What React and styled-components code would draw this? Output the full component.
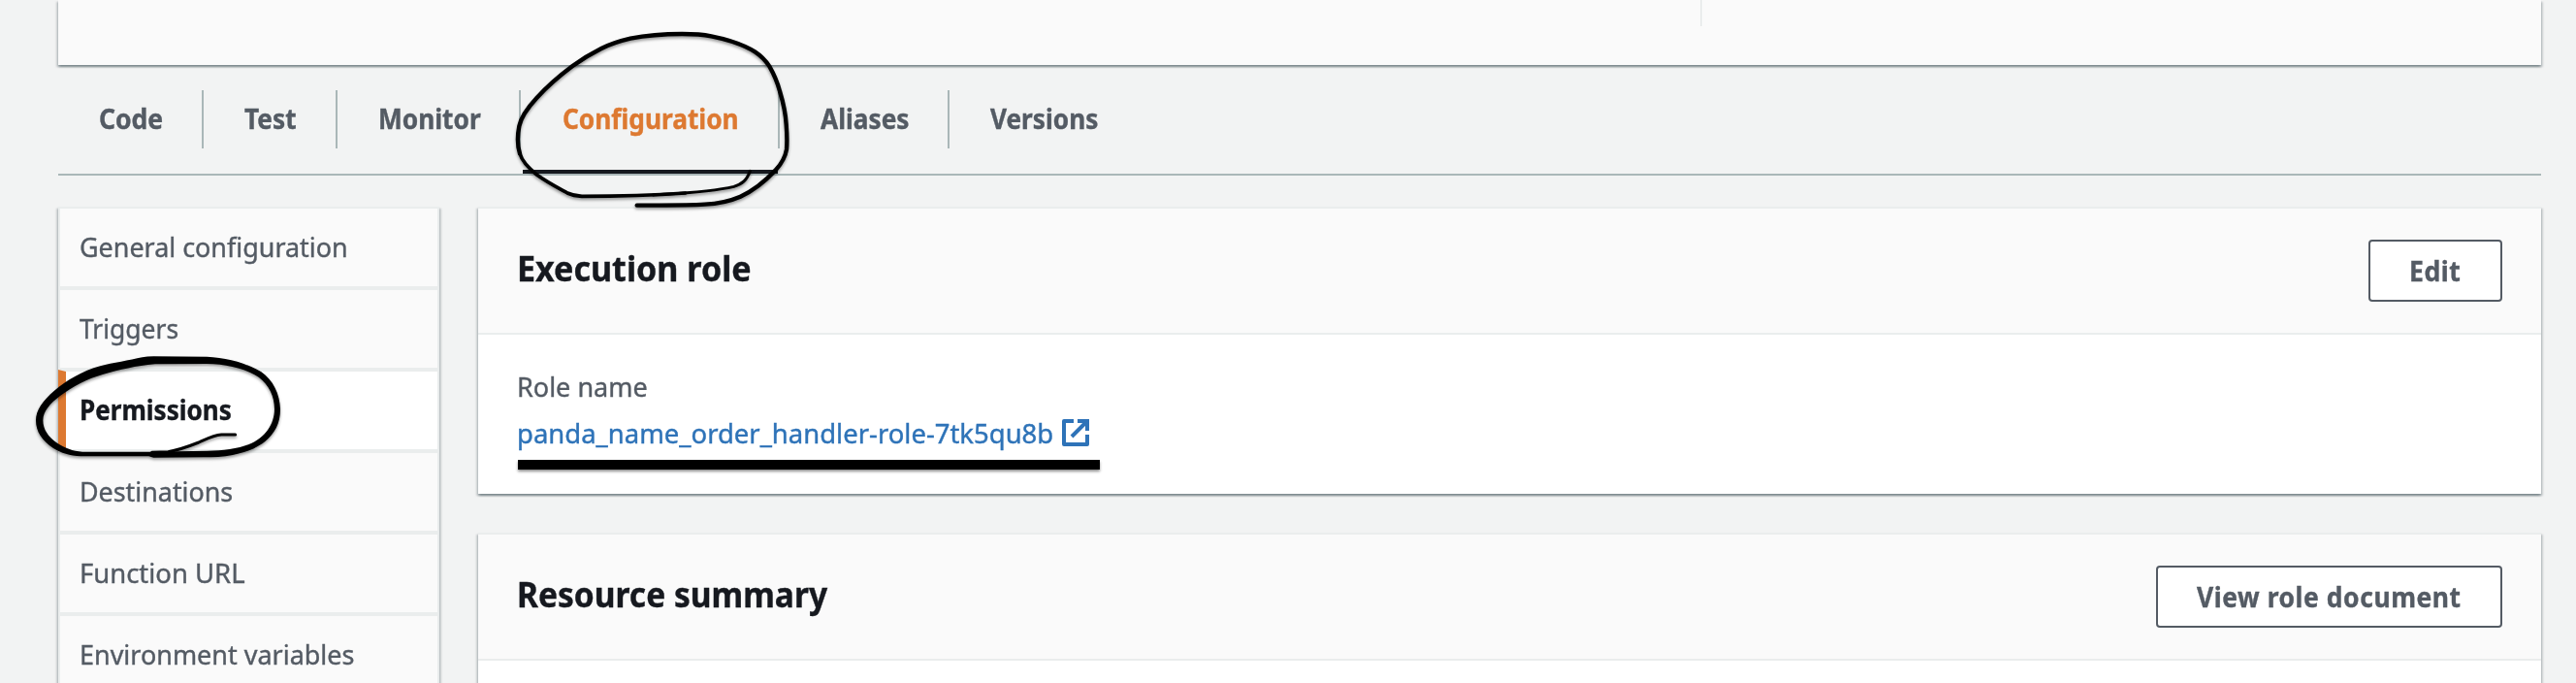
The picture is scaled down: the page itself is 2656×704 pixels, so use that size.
import React from "react";
import styled, { createGlobalStyle, css } from "styled-components";

const GlobalStyle = createGlobalStyle`
  * { box-sizing: border-box; }
  html, body { margin: 0; padding: 0; }
  body {
    background: #f2f3f3;
    color: #16191f;
    font-family: "Noto Sans", "Open Sans", sans-serif;
    font-size: 28px;
  }
`;

const cardShadow = css`
  box-shadow:
    0 2px 2px 0 rgba(0, 28, 36, 0.3),
    2px 2px 2px 0 rgba(0, 28, 36, 0.15),
    -2px 2px 2px 0 rgba(0, 28, 36, 0.15);
`;

const Page = styled.main`
  position: relative;
  width: 2656px;
  height: 704px;
  overflow: hidden;
  padding: 0 36px 0 60px;
  display: flex;
  flex-direction: column;
`;

/* Text condensed horizontally by a small factor, anchored at its left edge. */
const Label = styled.span`
  display: inline-block;
  white-space: nowrap;
  transform: scaleX(${(p) => p.$fit || 0.96});
  transform-origin: left center;
  -webkit-text-stroke: 0.4px currentColor;
`;

const OverviewCard = styled.section`
  height: 67px;
  flex: none;
  display: flex;
  background: #fafafa;
  ${cardShadow}
`;

const OverviewColumn = styled.div`
  width: 1695px;
  height: 27px;
  border-right: 2px solid #eaeded;
`;

const TabBar = styled.nav`
  flex: none;
  display: flex;
  height: 114px;
  padding-top: 26px;
  border-bottom: 2px solid #aab7b8;
`;

const Tab = styled.a`
  position: relative;
  width: ${(p) => p.$width}px;
  height: 60px;
  padding-left: ${(p) => p.$inset}px;
  border-right: 2px solid ${(p) => (p.$last ? "transparent" : "#aab7b8")};
  color: ${(p) => (p.$active ? "#dd7931" : "#545b64")};
  font-weight: 700;
  line-height: 58px;
  ${(p) =>
    p.$active &&
    css`
      &::after {
        content: "";
        position: absolute;
        left: 2px;
        right: 0;
        bottom: -26px;
        height: 4px;
        background: #16191f;
      }
    `}
`;

const Content = styled.div`
  flex: 1;
  display: flex;
  align-items: flex-start;
  gap: 40px;
  padding-top: 32px;
`;

const SideNav = styled.ul`
  width: 393px;
  flex: none;
  margin: 0;
  padding: 0;
  list-style: none;
  border: 2px solid #eaeded;
  background: #eaeded;
  display: flex;
  flex-direction: column;
  gap: 4px;
  ${cardShadow}
`;

const SideItem = styled.li`
  height: 80px;
  padding-left: 20px;
  line-height: 78px;
  background: #fafafa;
  color: #545b64;
  ${(p) =>
    p.$active &&
    css`
      height: 84px;
      margin: -2px 0 -2px -2px;
      padding-left: 14px;
      border-style: solid;
      border-width: 2px 0 2px 8px;
      border-color: #eaeded #eaeded #eaeded #dd7931;
      background: #fff;
      background-clip: padding-box;
      color: #16191f;
      font-weight: 700;
    `}
`;

const Panels = styled.div`
  flex: 1;
  display: flex;
  flex-direction: column;
  gap: 40px;
`;

const Card = styled.section`
  height: ${(p) => p.$height}px;
  border-top: 2px solid #eaeded;
  background: #fff;
  ${cardShadow}
`;

const CardHeader = styled.header`
  height: 130px;
  display: flex;
  align-items: center;
  justify-content: space-between;
  padding: 0 40px;
  background: #fafafa;
  border-bottom: 2px solid #eaeded;
`;

const Title = styled.h2`
  margin: 0;
  padding-bottom: 5px;
  font-size: 36px;
  line-height: 44px;
  font-weight: 700;
`;

const Button = styled.button`
  width: ${(p) => p.$width}px;
  height: 64px;
  padding: 0 0 1px 40px;
  border: 2px solid #545b64;
  border-radius: 4px;
  background: #fff;
  color: #545b64;
  font: 700 28px/56px "Noto Sans", "Open Sans", sans-serif;
  letter-spacing: 0.6px;
  text-align: left;
`;

const CardBody = styled.div`
  padding: 31px 40px 0;
  display: flex;
  flex-direction: column;
  gap: 4px;
`;

const FieldName = styled.div`
  height: 44px;
  line-height: 44px;
  color: #545b64;
`;

const RoleLink = styled.a`
  width: 590px;
  height: 44px;
  display: flex;
  align-items: center;
  justify-content: space-between;
  line-height: 44px;
  color: #2e73b8;
`;

const LinkText = styled.span`
  width: 552px;
`;

const Underline = styled.div`
  width: 600px;
  height: 10px;
  margin: 2px 0 0 1px;
  background: #000;
  box-shadow: 0 2px 3px rgba(0, 0, 0, 0.45);
`;

const Sketch = styled.svg`
  position: absolute;
  left: ${(p) => p.$x}px;
  top: ${(p) => p.$y}px;
  overflow: visible;
  pointer-events: none;
  filter: drop-shadow(0 2px 1.5px rgba(0, 0, 0, 0.4));
`;

const ExternalIcon = () => (
  <svg width="28" height="28" viewBox="0 0 28 28" fill="none" stroke="#2e73b8" strokeWidth="4">
    <path d="M12 2H2V26H26V16" strokeLinejoin="round" />
    <path d="M16 2H26V12M10 18L25 3" />
  </svg>
);

const tabs = [
  { name: "Code", width: 150, inset: 42, fit: 0.947 },
  { name: "Test", width: 138, inset: 42, fit: 0.937 },
  { name: "Monitor", width: 189, inset: 42, fit: 0.938 },
  { name: "Configuration", width: 267, inset: 43, fit: 0.938, active: true },
  { name: "Aliases", width: 175, inset: 42, fit: 0.937 },
  { name: "Versions", width: 200, inset: 42, fit: 0.935, last: true },
];

const sideItems = [
  { name: "General configuration", fit: 0.961 },
  { name: "Triggers", fit: 0.944 },
  { name: "Permissions", fit: 0.931, active: true },
  { name: "Destinations", fit: 0.959 },
  { name: "Function URL", fit: 0.98 },
  { name: "Environment variables", fit: 0.963 },
];

export default function App() {
  return (
    <Page>
      <GlobalStyle />
      <OverviewCard>
        <OverviewColumn />
      </OverviewCard>

      <TabBar>
        {tabs.map((t) => (
          <Tab key={t.name} $width={t.width} $inset={t.inset} $active={t.active} $last={t.last}>
            <Label $fit={t.fit}>{t.name}</Label>
          </Tab>
        ))}
      </TabBar>

      <Content>
        <SideNav>
          {sideItems.map((s) => (
            <SideItem key={s.name} $active={s.active}>
              <Label $fit={s.fit}>{s.name}</Label>
            </SideItem>
          ))}
        </SideNav>

        <Panels>
          <Card $height={296}>
            <CardHeader>
              <Title>
                <Label $fit={0.946}>Execution role</Label>
              </Title>
              <Button $width={138}>
                <Label $fit={0.95}>Edit</Label>
              </Button>
            </CardHeader>
            <CardBody>
              <FieldName>
                <Label $fit={0.965}>Role name</Label>
              </FieldName>
              <RoleLink>
                <LinkText>
                  <Label $fit={0.981}>panda_name_order_handler-role-7tk5qu8b</Label>
                </LinkText>
                <ExternalIcon />
              </RoleLink>
              <Underline />
            </CardBody>
          </Card>

          <Card $height={300}>
            <CardHeader>
              <Title>
                <Label $fit={0.931}>Resource summary</Label>
              </Title>
              <Button $width={357}>
                <Label $fit={0.944}>View role document</Label>
              </Button>
            </CardHeader>
          </Card>
        </Panels>
      </Content>

      {/* Pen loop around the active tab */}
      <Sketch $x={500} $y={0} width="350" height="240" viewBox="0 0 1050 720" fill="none" stroke="#000" strokeLinecap="round" strokeLinejoin="round">
        <path strokeWidth="9" d="M820 529C810 558 796 569 770 577C700 594 600 598 520 603" />
        <path strokeWidth="11" d="M620 597C520 604 420 607 300 607C280 606 268 603 255 597C215 575 190 562 160 540C135 520 115 500 108 475" />
        <path strokeWidth="13" d="M108 475C100 450 100 420 106 390C112 360 135 330 160 303C190 270 230 235 270 205C300 183 330 165 360 150C390 135 420 126 450 119C500 109 560 105 610 105C640 105 670 106 700 112C750 122 800 138 835 160C855 173 868 187 880 205C897 235 905 255 912 282C922 315 930 350 932 385C934 410 935 440 933 462C930 480 918 505 900 525C870 557 830 590 790 608C755 623 720 630 680 632C610 636 540 634 470 635" />
      </Sketch>

      {/* Pen loop around the active side item */}
      <Sketch $x={0} $y={340} width="500" height="364" viewBox="0 0 1500 1092">
        <path
          fillRule="evenodd"
          d="M111 280C111 248 132 219 168 188C205 157 255 127 310 112C350 102 400 94 440 85Q455 82 475 82L640 83C700 86 760 101 808 130C845 155 866 200 867 245C867 290 850 318 820 345C790 368 760 379 720 387C690 393 660 394 630 394L475 395L460 391L250 391C215 389 190 381 165 366C130 343 111 315 111 280ZM133 280C133 308 150 332 175 349C200 365 225 376 255 377L460 377L640 374C690 373 735 368 770 354C820 333 849 292 849 245C849 205 832 170 800 146C760 120 700 106 640 105L480 106C420 111 370 124 320 137C270 151 225 175 185 205C155 228 133 252 133 280Z"
        />
        <path fill="none" stroke="#000" strokeWidth="9" strokeLinecap="round" d="M728 324L685 324C660 326 640 337 615 348C580 362 555 371 520 377L470 379" />
      </Sketch>
    </Page>
  );
}
